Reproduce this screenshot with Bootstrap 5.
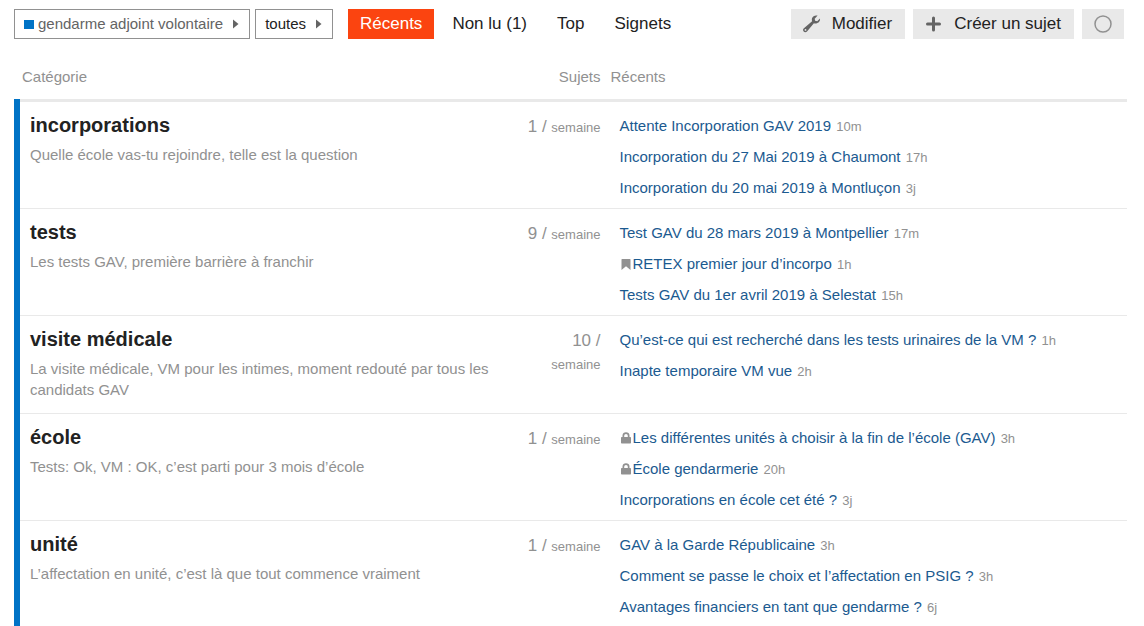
<!DOCTYPE html>
<html lang="fr">
<head>
<meta charset="utf-8">
<meta name="viewport" content="width=device-width, initial-scale=1">
<title>gendarme adjoint volontaire - Catégories</title>
<link href="https://cdn.jsdelivr.net/npm/bootstrap@5.3.0/dist/css/bootstrap.min.css" rel="stylesheet">
<style>
  body { font-family: "Liberation Sans", Arial, sans-serif; font-size: 15px; line-height: 21px; color: #222; background: #fff; }
  .topbar { padding: 9px 20px 0 14px; }
  .topbar .btn, .topbar .nav-link { --bs-btn-border-radius: 0; height: 30px; border-radius: 0; white-space: nowrap; }
  .crumbs { gap: 5px; }
  .crumb { --bs-btn-color: #222; --bs-btn-hover-color: #222; --bs-btn-border-color: #919191; --bs-btn-hover-border-color: #919191; font-size: 15px; line-height: 20px; padding: 4px 10px 4px 9px; }
  .crumb-parent { --bs-btn-color: #646464; }
  .swatch { width: 10px; height: 9px; background: #0073c6; margin-right: 4px; }
  .crumb svg { margin-left: 10px; }
  .tabs { --bs-nav-link-color: #222; --bs-nav-link-hover-color: #222; --bs-nav-pills-link-active-bg: #fb4410; --bs-nav-pills-border-radius: 0; gap: 6px; margin-left: 15px; }
  .tabs .nav-link { font-size: 17px; line-height: 20px; padding: 5px 12px; }
  .act { --bs-btn-bg: #e9e9e9; --bs-btn-color: #222; --bs-btn-hover-bg: #ddd; --bs-btn-hover-color: #222; border: 0; font-size: 17px; line-height: 20px; padding: 5px 12px; }
  .act-text { padding-right: 13px; }
  .act svg { display: block; }
  .table-area { padding: 26px 17px 0 14px; }
  .cats { width: 100%; table-layout: fixed; border-collapse: collapse; }
  .cats .c-name { width: 45%; }
  .cats .c-count { width: 89px; }
  .cats thead th { font-weight: 400; color: #919191; padding: 1px 5px 12px; border-bottom: 3px solid #e9e9e9; }
  .cats tbody tr { border-bottom: 1px solid #e9e9e9; }
  .cats tbody tr:last-child { border-bottom: 0; }
  .cats td, .cats tbody th { vertical-align: top; }
  .cats tbody th { border-left: 6px solid #0073c6; padding: 10px 10px 13px; font-weight: 400; color: #919191; }
  .cats h2 { font-size: 20px; line-height: 26px; font-weight: 700; margin: 0 0 6px; }
  .cats h2 a { color: #222; text-decoration: none; }
  .cats .count { padding: 13px 5px 0; text-align: right; color: #919191; font-size: 17px; line-height: 23px; }
  .cats .count span, .age { font-size: 13px; color: #919191; }
  .age { margin-left: 1px; }
  .cats .recent { padding: 8px 10px 5px 14px; }
  .recent li { line-height: 31px; height: 31px; }
  .recent a { color: #1b5a90; text-decoration: none; }
  .recent svg { display: inline-block; vertical-align: -1px; margin: 0 2px 0 1px; fill: #919191; }
</style>
</head>
<body>
<header class="topbar d-flex align-items-start">
  <nav class="crumbs d-flex" aria-label="Filtres">
    <button type="button" class="btn crumb crumb-parent d-flex align-items-center"><span class="swatch"></span>gendarme adjoint volontaire<svg width="6" height="10" viewBox="0 0 6 10" fill="#646464"><path d="M0 .5 5.5 5 0 9.500Z"/></svg></button>
    <button type="button" class="btn crumb d-flex align-items-center">toutes<svg width="6" height="10" viewBox="0 0 6 10" fill="#646464"><path d="M0 .5 5.500 5 0 9.500Z"/></svg></button>
  </nav>
  <ul class="nav nav-pills tabs flex-nowrap">
    <li class="nav-item"><a class="nav-link active" href="#">Récents</a></li>
    <li class="nav-item"><a class="nav-link" href="#">Non lu (1)</a></li>
    <li class="nav-item"><a class="nav-link" href="#">Top</a></li>
    <li class="nav-item"><a class="nav-link" href="#">Signets</a></li>
  </ul>
  <div class="d-flex gap-2 ms-auto">
    <button type="button" class="btn act act-text d-flex align-items-center"><svg class="me-2" width="21" height="18" viewBox="0 0 21 18"><path d="M17 3.600 14.200 6.200 12.100 5.700 11.700 3.700 14.600.6C12.300-.1 9.700 1 9 3.300 8.700 4.300 8.800 5.300 9.100 6.200L.9 13.200C-.2 14.200-.2 15.700.7 16.600 1.700 17.500 3.100 17.400 4 16.400L10.900 8.200C13.700 9 17.400 7.200 17 3.600ZM2.500 15.800A.9.9 0 1 1 2.500 14 .9.9 0 0 1 2.500 15.800Z" fill="#646464"/></svg>Modifier</button>
    <button type="button" class="btn act act-text d-flex align-items-center"><svg class="me-2" width="21" height="16" viewBox="0 0 21 16"><path d="M8.500 2V14M2.500 8H14.500" stroke="#646464" stroke-width="3" stroke-linecap="round"/></svg>Créer un sujet</button>
    <button type="button" class="btn act" aria-label="Suivi"><svg width="18" height="18" viewBox="0 0 18 18"><circle cx="9" cy="9" r="8" fill="none" stroke="#919191" stroke-width="1.500"/></svg></button>
  </div>
</header>

<main class="table-area">
  <table class="cats">
    <colgroup><col class="c-name"><col class="c-count"><col></colgroup>
    <thead>
      <tr><th scope="col">Catégorie</th><th scope="col" class="text-end">Sujets</th><th scope="col">Récents</th></tr>
    </thead>
    <tbody>
      <tr>
        <th scope="row"><h2><a href="#">incorporations</a></h2>Quelle école vas-tu rejoindre, telle est la question</th>
        <td class="count">1 / <span>semaine</span></td>
        <td class="recent"><ul class="list-unstyled mb-0">
          <li><a href="#">Attente Incorporation GAV 2019</a> <span class="age">10m</span></li>
          <li><a href="#">Incorporation du 27 Mai 2019 à Chaumont</a> <span class="age">17h</span></li>
          <li><a href="#">Incorporation du 20 mai 2019 à Montluçon</a> <span class="age">3j</span></li>
        </ul></td>
      </tr>
      <tr>
        <th scope="row"><h2><a href="#">tests</a></h2>Les tests GAV, première barrière à franchir</th>
        <td class="count">9 / <span>semaine</span></td>
        <td class="recent"><ul class="list-unstyled mb-0">
          <li><a href="#">Test GAV du 28 mars 2019 à Montpellier</a> <span class="age">17m</span></li>
          <li><svg width="10" height="11" viewBox="0 0 10 11"><path d="M1 0H9Q9.500 0 9.500.6V11L5 7.300.5 11V.6Q.5 0 1 0Z"/></svg><a href="#">RETEX premier jour d’incorpo</a> <span class="age">1h</span></li>
          <li><a href="#">Tests GAV du 1er avril 2019 à Selestat</a> <span class="age">15h</span></li>
        </ul></td>
      </tr>
      <tr>
        <th scope="row"><h2><a href="#">visite médicale</a></h2>La visite médicale, VM pour les intimes, moment redouté par tous les candidats GAV</th>
        <td class="count">10 / <span>semaine</span></td>
        <td class="recent"><ul class="list-unstyled mb-0">
          <li><a href="#">Qu’est-ce qui est recherché dans les tests urinaires de la VM ?</a> <span class="age">1h</span></li>
          <li><a href="#">Inapte temporaire VM vue</a> <span class="age">2h</span></li>
        </ul></td>
      </tr>
      <tr>
        <th scope="row"><h2><a href="#">école</a></h2>Tests: Ok, VM : OK, c’est parti pour 3 mois d’école</th>
        <td class="count">1 / <span>semaine</span></td>
        <td class="recent"><ul class="list-unstyled mb-0">
          <li><svg width="10" height="12" viewBox="0 0 10 12"><path d="M.8 5H1.500V3.500C1.500 1.500 3 .3 5 .3S8.500 1.500 8.500 3.500V5H9.200Q10 5 10 5.800V10.700Q10 11.500 9.200 11.500H.8Q0 11.500 0 10.700V5.800Q0 5 .8 5ZM3.200 5H6.800V3.700Q6.800 2 5 2T3.200 3.700Z"/></svg><a href="#">Les différentes unités à choisir à la fin de l’école (GAV)</a> <span class="age">3h</span></li>
          <li><svg width="10" height="12" viewBox="0 0 10 12"><path d="M.8 5H1.500V3.500C1.500 1.500 3 .3 5 .3S8.500 1.500 8.500 3.500V5H9.200Q10 5 10 5.800V10.700Q10 11.500 9.200 11.500H.8Q0 11.500 0 10.700V5.800Q0 5 .8 5ZM3.200 5H6.800V3.700Q6.800 2 5 2T3.200 3.700Z"/></svg><a href="#">École gendarmerie</a> <span class="age">20h</span></li>
          <li><a href="#">Incorporations en école cet été ?</a> <span class="age">3j</span></li>
        </ul></td>
      </tr>
      <tr>
        <th scope="row"><h2><a href="#">unité</a></h2>L’affectation en unité, c’est là que tout commence vraiment</th>
        <td class="count">1 / <span>semaine</span></td>
        <td class="recent"><ul class="list-unstyled mb-0">
          <li><a href="#">GAV à la Garde Républicaine</a> <span class="age">3h</span></li>
          <li><a href="#">Comment se passe le choix et l’affectation en PSIG ?</a> <span class="age">3h</span></li>
          <li><a href="#">Avantages financiers en tant que gendarme ?</a> <span class="age">6j</span></li>
        </ul></td>
      </tr>
    </tbody>
  </table>
</main>
<script src="https://cdn.jsdelivr.net/npm/bootstrap@5.3.0/dist/js/bootstrap.bundle.min.js"></script>
</body>
</html>
